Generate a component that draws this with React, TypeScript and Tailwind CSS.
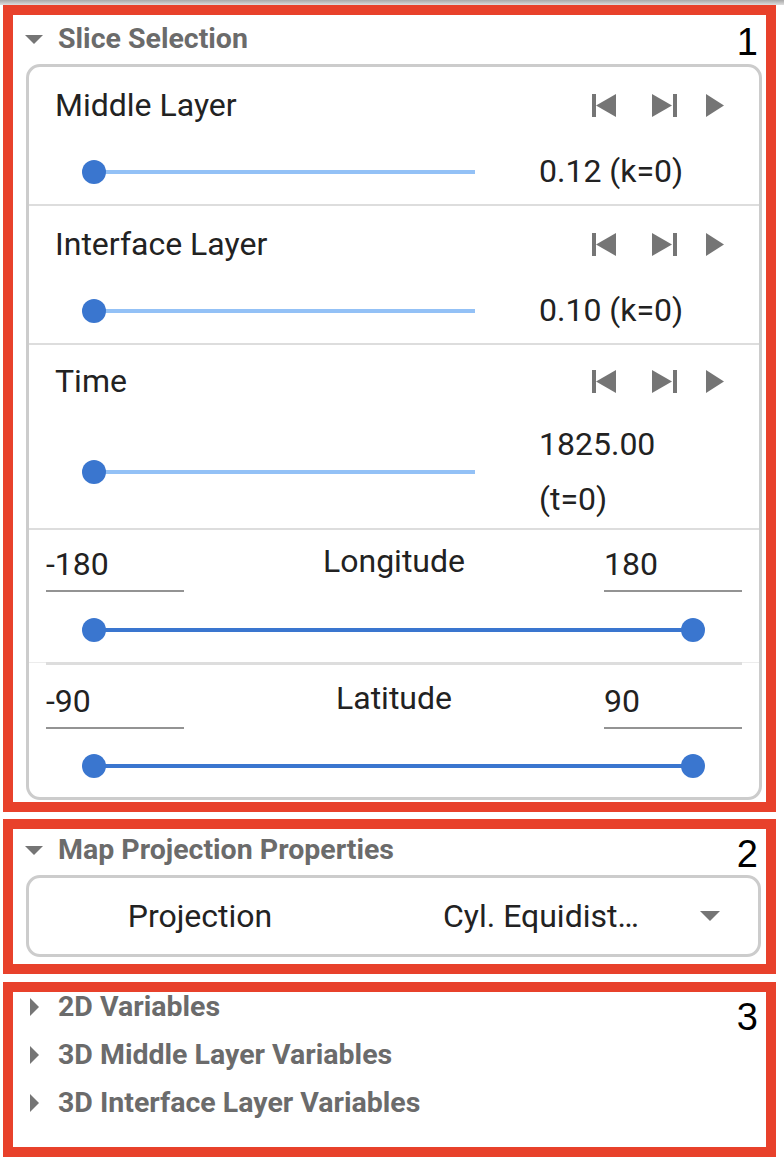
import type { ReactNode } from "react";

function Section({ n, numTop, className, children }: { n: string; numTop: string; className: string; children: ReactNode }) {
  return (
    <section className={`relative ml-[3px] w-[773px] border-[10px] border-[#e8412b] bg-white ${className}`}>
      {children}
      <span
        className={`absolute right-[8px] ${numTop} font-['Liberation_Sans',Arial,sans-serif] text-[38px] leading-[38px] text-black`}
      >
        {n}
      </span>
    </section>
  );
}

function CaretDown() {
  return (
    <svg width="18" height="9" viewBox="0 0 18 9" className="shrink-0">
      <polygon points="0,0 18,0 9,9" fill="#757575" />
    </svg>
  );
}

function CaretRight() {
  return (
    <svg width="9" height="18" viewBox="0 0 9 18" className="shrink-0">
      <polygon points="0,0 9,9 0,18" fill="#757575" />
    </svg>
  );
}

function PlayerControls() {
  return (
    <div className="flex items-center">
      <svg width="24" height="23" viewBox="0 0 24 23">
        <rect x="0" y="0" width="4" height="23" fill="#757575" />
        <polygon points="24,0 4,11.5 24,23" fill="#757575" />
      </svg>
      <svg width="25" height="23" viewBox="0 0 25 23" className="ml-[36px]">
        <polygon points="0,0 20,11.5 0,23" fill="#757575" />
        <rect x="21" y="0" width="4" height="23" fill="#757575" />
      </svg>
      <svg width="18" height="23" viewBox="0 0 18 23" className="ml-[29px]">
        <polygon points="0,0 18,11.5 0,23" fill="#757575" />
      </svg>
    </div>
  );
}

function SingleSlider() {
  return (
    <div className="relative h-[24px] w-[405px] shrink-0">
      <div className="absolute left-[12px] right-[12px] top-[10px] h-[4px] bg-[#93c1f6]" />
      <div className="absolute left-0 top-0 h-[24px] w-[24px] rounded-full bg-[#3a76cf]" />
    </div>
  );
}

function RangeSlider() {
  return (
    <div className="relative h-[24px] w-[623px]">
      <div className="absolute left-[12px] right-[12px] top-[10px] h-[4px] bg-[#3a76cf]" />
      <div className="absolute left-0 top-0 h-[24px] w-[24px] rounded-full bg-[#3a76cf]" />
      <div className="absolute right-0 top-0 h-[24px] w-[24px] rounded-full bg-[#3a76cf]" />
    </div>
  );
}

function LayerRow({ title, value, top, gap, bottom }: { title: string; value: string; top: string; gap: string; bottom: string }) {
  return (
    <div className={`${top} ${bottom}`}>
      <div className="flex h-[40px] items-center justify-between pl-[26px] pr-[35px]">
        <span className="-mt-[1px] leading-[40px]">{title}</span>
        <PlayerControls />
      </div>
      <div className={`flex items-center pl-[53px] ${gap}`}>
        <SingleSlider />
        <div className="ml-[52px] w-[180px] leading-[55px]">{value}</div>
      </div>
    </div>
  );
}

function Field({ value }: { value: string }) {
  return <div className="h-[48px] w-[138px] border-b-2 border-[#939393] leading-[40px]">{value}</div>;
}

function RangeRow({ label, min, max, top, gap, bottom }: { label: string; min: string; max: string; top: string; gap: string; bottom: string }) {
  return (
    <div className={`${top} ${bottom}`}>
      <div className="flex items-start justify-between px-[17px]">
        <Field value={min} />
        <span className="-mt-[3px] leading-[40px]">{label}</span>
        <Field value={max} />
      </div>
      <div className={`pl-[53px] ${gap}`}>
        <RangeSlider />
      </div>
    </div>
  );
}

const headerText = "font-bold text-[28.5px] leading-[34px] text-[#6b6b6b]";

export default function App() {
  return (
    <div className="h-[1168px] w-[784px] overflow-hidden bg-white font-[Roboto,sans-serif] text-[32px] text-[#222222]">
      <div className="h-[5px] bg-linear-to-b from-[#a8a8a8] to-[#dedede]" />

      <Section n="1" numTop="top-[8px]" className="h-[807px]">
        <div className="flex items-center pl-[12px] pt-[7px]">
          <CaretDown />
          <h2 className={`ml-[15px] ${headerText}`}>Slice Selection</h2>
        </div>
        <div className="ml-[13px] mt-[8px] h-[736px] w-[736px] rounded-[14px] border-[3px] border-[#cccccc]">
          <LayerRow title="Middle Layer" value="0.12 (k=0)" top="pt-[18px]" gap="mt-[19px]" bottom="pb-[5px]" />
          <div className="h-[2px] bg-[#dddddd]" />
          <LayerRow title="Interface Layer" value="0.10 (k=0)" top="pt-[18px]" gap="mt-[19px]" bottom="pb-[5px]" />
          <div className="h-[2px] bg-[#dddddd]" />
          <LayerRow title="Time" value="1825.00 (t=0)" top="pt-[16px]" gap="mt-[16px]" bottom="pb-[1px]" />
          <div className="h-[2px] bg-[#dddddd]" />
          <RangeRow label="Longitude" min="-180" max="180" top="pt-[14px]" gap="mt-[26px]" bottom="pb-[20px]" />
          <div className="h-[3px] border-t border-[#ececec]">
            <div className="mx-[17px] -mt-px h-[3px] bg-[#dddddd]" />
          </div>
          <RangeRow label="Latitude" min="-90" max="90" top="pt-[16px]" gap="mt-[25px]" bottom="pb-[19px]" />
        </div>
      </Section>

      <Section n="2" numTop="top-[6px]" className="mt-[7px] h-[155px]">
        <div className="flex items-center pl-[12px] pt-[4px]">
          <CaretDown />
          <h2 className={`ml-[15px] ${headerText}`}>Map Projection Properties</h2>
        </div>
        <div className="ml-[13px] mt-[8px] flex h-[82px] w-[735px] items-center rounded-[14px] border-[3px] border-[#cccccc]">
          <span className="w-[342px] text-center leading-[40px]">Projection</span>
          <div className="ml-[72px] flex flex-1 items-center justify-between pr-[38px]">
            <span className="leading-[40px]">Cyl. Equidist…</span>
            <svg width="20" height="10" viewBox="0 0 20 10">
              <polygon points="0,0 20,0 10,10" fill="#757575" />
            </svg>
          </div>
        </div>
      </Section>

      <Section n="3" numTop="top-[6px]" className="mt-[8px] h-[175px]">
        <ul className="flex flex-col gap-[18px] pl-[17px]">
          {["2D Variables", "3D Middle Layer Variables", "3D Interface Layer Variables"].map((t) => (
            <li key={t} className="flex items-center">
              <CaretRight />
              <span className="ml-[19px] font-bold text-[28.5px] leading-[30px] text-[#6b6b6b]">{t}</span>
            </li>
          ))}
        </ul>
      </Section>
    </div>
  );
}
